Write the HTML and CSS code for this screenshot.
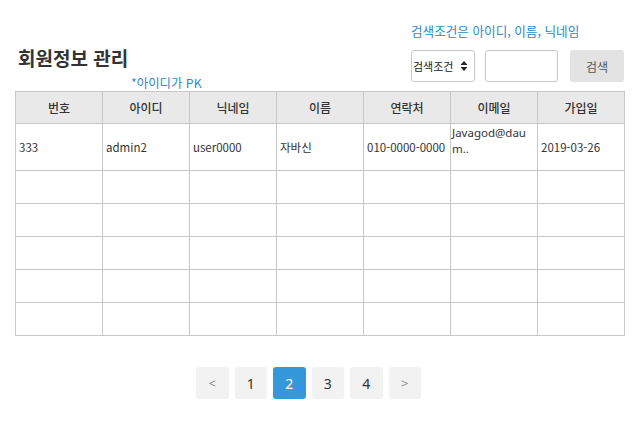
FILE: index.html
```html
<!DOCTYPE html>
<html lang="ko">
<head>
<meta charset="utf-8">
<title>회원정보 관리</title>
<link rel="stylesheet" href="styles.css">
</head>
<body>
<div class="page">
  <div class="top">
    <div class="title-block">
      <h1 class="title">회원정보 관리</h1>
      <div class="note">*아이디가 PK</div>
    </div>
    <div class="search-block">
      <div class="hint">검색조건은 아이디, 이름, 닉네임</div>
      <div class="controls">
        <div class="select">
          <span>검색조건</span>
          <svg class="spin" width="8" height="12" viewBox="0 0 8 12"><path d="M4 1 L7.5 5 L0.5 5 Z M4 11 L7.5 7 L0.5 7 Z" fill="#222"/></svg>
        </div>
        <div class="input"></div>
        <button class="btn">검색</button>
      </div>
    </div>
  </div>
  <table class="grid">
    <thead>
      <tr><th>번호</th><th>아이디</th><th>닉네임</th><th>이름</th><th>연락처</th><th>이메일</th><th>가입일</th></tr>
    </thead>
    <tbody>
      <tr class="first"><td>333</td><td>admin2</td><td>user0000</td><td>자바신</td><td>010-0000-0000</td><td class="email"><div class="line">Javagod@dau</div><div class="line">m..</div></td><td>2019-03-26</td></tr>
      <tr><td></td><td></td><td></td><td></td><td></td><td></td><td></td></tr>
      <tr><td></td><td></td><td></td><td></td><td></td><td></td><td></td></tr>
      <tr><td></td><td></td><td></td><td></td><td></td><td></td><td></td></tr>
      <tr><td></td><td></td><td></td><td></td><td></td><td></td><td></td></tr>
      <tr><td></td><td></td><td></td><td></td><td></td><td></td><td></td></tr>
    </tbody>
  </table>
  <div class="pager">
    <span class="pg arrow">&lt;</span>
    <span class="pg">1</span>
    <span class="pg active">2</span>
    <span class="pg">3</span>
    <span class="pg">4</span>
    <span class="pg arrow">&gt;</span>
  </div>
</div>
</body>
</html>
```
FILE: styles.css
```css
* { box-sizing: border-box; }
html, body { margin: 0; padding: 0; background: #fff; }
body {
  font-family: "Noto Sans CJK KR", "Noto Sans", sans-serif;
  color: #333;
  font-size: 12px;
}
.page { padding-left: 15px; width: 625px; }
.top {
  display: flex;
  justify-content: space-between;
  align-items: flex-end;
  height: 91px;
}
.title-block { display: flex; flex-direction: column; }
.title {
  margin: 0;
  font-size: 19px;
  line-height: 24px;
  font-weight: 700;
  color: #333;
  padding-left: 3px;
}
.note {
  color: #2f88c8;
  font-size: 12.4px;
  line-height: 16px;
  margin-top: 5px;
  padding-left: 116px;
}
.search-block {
  display: flex;
  flex-direction: column;
  align-items: flex-start;
  padding-bottom: 9px;
  margin-right: 1px;
}
.hint {
  color: #2f88c8;
  font-size: 12.6px;
  line-height: 18px;
  margin-bottom: 10px;
}
.controls { display: flex; align-items: center; }
.select {
  width: 64px;
  height: 32px;
  border: 1px solid #c8c8c8;
  border-radius: 3px;
  display: flex;
  align-items: center;
  justify-content: space-between;
  padding: 0 6px 0 1px;
  font-size: 11px;
  color: #222;
}
.input {
  width: 73px;
  height: 32px;
  border: 1px solid #c8c8c8;
  border-radius: 3px;
  margin-left: 10px;
}
.btn {
  width: 54px;
  height: 32px;
  border: none;
  border-radius: 3px;
  background: #e3e3e3;
  color: #555;
  font-family: inherit;
  font-size: 12px;
  margin-left: 12px;
  padding: 0;
}
.grid {
  border-collapse: collapse;
  table-layout: fixed;
  width: 610px;
}
.grid th, .grid td {
  border: 1px solid #c8c8c8;
  width: 87px;
  padding: 0 3px;
}
.grid th {
  background: #e9e9e9;
  height: 32px;
  font-size: 12px;
  font-weight: 500;
  text-align: center;
  color: #333;
}
.grid td {
  height: 33px;
  text-align: left;
  color: #333;
  font-size: 11.5px;
  white-space: nowrap;
}
.grid tr.first td { height: 47px; }
.grid td.email { vertical-align: top; padding: 1px 1px 0; }
.email .line { font-family: "Noto Sans", sans-serif; line-height: 16px; height: 16px; }
.pager {
  display: flex;
  gap: 6px;
  margin-top: 31px;
  padding-left: 181px;
}
.pg {
  width: 32.5px;
  height: 32px;
  border-radius: 3px;
  background: #f2f2f2;
  display: flex;
  align-items: center;
  justify-content: center;
  font-family: "Noto Sans", sans-serif;
  font-size: 14px;
  color: #333;
}
.pg.arrow { color: #888; font-size: 13px; }
.pg.active { background: #3498db; color: #fff; }
```
